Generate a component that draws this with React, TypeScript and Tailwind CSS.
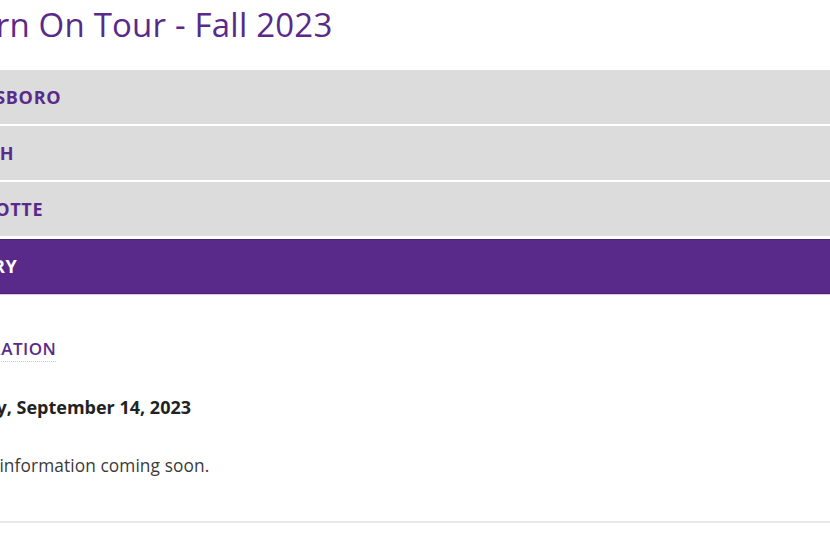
import React from "react";

const stops = [
  { city: "Greensboro", active: false },
  { city: "Raleigh", active: false },
  { city: "Charlotte", active: false },
  { city: "Hickory", active: true },
];

export default function App() {
  return (
    <div
      className="min-h-screen overflow-hidden bg-white"
      style={{ fontFamily: '"Open Sans", "Liberation Sans", sans-serif' }}
    >
      <h1 className="ml-[-76px] pt-[5px] text-[33px] leading-[40px] font-normal tracking-[0.2px] text-[#592a8a]">
        Return On Tour - Fall 2023
      </h1>

      <div className="mt-[25px] ml-[-68px] flex flex-col">
        {stops.map((s) =>
          s.active ? (
            <div
              key={s.city}
              className="mt-[1px] flex h-[55px] items-center border-y border-[#4d2277] bg-[#592a8a] text-[18px] font-bold uppercase tracking-[0.7px] text-white shadow-[0_1px_0_#d8cde4]"
            >
              {s.city}
            </div>
          ) : (
            <div
              key={s.city}
              className="mb-[2px] flex h-[54px] items-center bg-[#dcdcdc] text-[18px] font-bold uppercase tracking-[0.7px] text-[#592a8a]"
            >
              {s.city}
            </div>
          )
        )}
      </div>

      <div className="ml-[-77px]">
        <div className="mt-[43px] pl-[7px]">
          <span className="inline-block border-b border-dotted border-[#c8c8c8] text-[17px] leading-[24px] font-semibold uppercase tracking-[0.5px] text-[#592a8a]">
            Registration
          </span>
        </div>

        <p className="mt-[31px] text-[18px] leading-[28px] font-bold text-[#222]">
          Thursday, September 14, 2023
        </p>

        <p className="mt-[32px] pl-[4px] text-[17.3px] leading-[26px] tracking-[0.1px] text-[#3a3a3a]">
          Detailed information coming soon.
        </p>
      </div>

      <div className="mt-[42px] border-t-2 border-[#e8e8e8]" />
    </div>
  );
}
